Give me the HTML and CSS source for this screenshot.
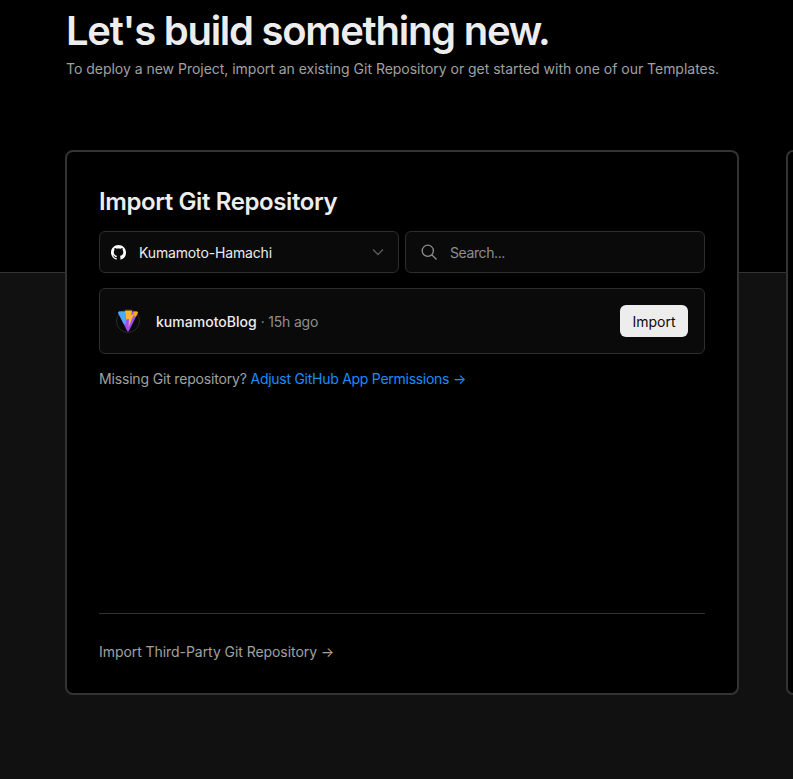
FILE: index.html
```html
<!doctype html>
<html lang="en">
    <head>
        <meta charset="UTF-8" />
        <meta name="viewport" content="width=device-width, initial-scale=1.0" />
        <title>Let's build something new.</title>
        <link rel="stylesheet" href="styles.css">
    </head>
    <body>
        <div class="hero">
            <h1>Let's build something new.</h1>
            <p>To deploy a new Project, import an existing Git Repository or get started with one of our Templates.</p>
        </div>

        <div class="cards">
            <div class="card">
                <h2>Import Git Repository</h2>

                <div class="search-box">
                    <div class="field account">
                        <svg class="github-icon" viewBox="0 0 16 16" width="15" height="15">
                            <path fill="#fff" d="M8 0C3.58 0 0 3.58 0 8c0 3.54 2.29 6.53 5.47 7.59.4.07.55-.17.55-.38 0-.19-.01-.82-.01-1.49-2.01.37-2.53-.49-2.69-.94-.09-.23-.48-.94-.82-1.13-.28-.15-.68-.52-.01-.53.63-.01 1.08.58 1.23.82.72 1.21 1.87.87 2.33.66.07-.52.28-.87.51-1.07-1.78-.2-3.64-.89-3.64-3.95 0-.87.31-1.59.82-2.15-.08-.2-.36-1.02.08-2.12 0 0 .67-.21 2.2.82.64-.18 1.32-.27 2-.27s1.36.09 2 .27c1.53-1.04 2.2-.82 2.2-.82.44 1.1.16 1.92.08 2.12.51.56.82 1.27.82 2.15 0 3.07-1.87 3.75-3.65 3.95.29.25.54.73.54 1.48 0 1.07-.01 1.93-.01 2.2 0 .21.15.46.55.38A8.01 8.01 0 0 0 16 8c0-4.42-3.58-8-8-8z"/>
                        </svg>
                        <span class="account-name">Kumamoto-Hamachi</span>
                        <svg class="chevron" viewBox="0 0 16 16" width="16" height="16">
                            <path fill="none" stroke="#5c5c5c" stroke-width="1.3" d="M3 5.5l5 5 5-5"/>
                        </svg>
                    </div>
                    <div class="field search">
                        <svg class="search-icon" viewBox="0 0 16 16" width="16" height="16">
                            <circle fill="none" stroke="#8f8f8f" stroke-width="1.3" cx="6.8" cy="6.8" r="5.6"/>
                            <path fill="none" stroke="#8f8f8f" stroke-width="1.3" d="M11 11l4.5 4.5"/>
                        </svg>
                        <span class="placeholder">Search...</span>
                    </div>
                </div>

                <div class="repo-row">
                    <div class="repo-logo">
                        <svg viewBox="0 0 24 24" width="24" height="24">
                            <circle cx="12" cy="12" r="11.5" fill="#0a0a0a" stroke="#2a2a2a"/>
                            <path fill="#9d4ff5" d="M2.2 4q-.3-1.5 1-1.5h17.6q1.3 0 1 1.5L12.8 22q-.8 1.2-1.6 0z"/>
                            <path fill="#4aa8fb" d="M2.2 4q-.3-1.5 1-1.5H9l1 11.5-2 1.5z"/>
                            <path fill="#fdb52c" d="M9 1.5h7.2l-1.2 4.5 3-1-5.4 13 .4-8-3 .6z"/>
                            <path fill="#f6a823" d="M17.4 2.5h3.4q1.3 0 1 1.5l-1.6 3.2-2.4.2z"/>
                        </svg>
                    </div>
                    <span class="repo-name">kumamotoBlog</span>
                    <span class="repo-time">· 15h ago</span>
                    <button class="import-button">Import</button>
                </div>

                <p class="missing">Missing Git repository? <a href="#">Adjust GitHub App Permissions →</a></p>

                <div class="card-footer">
                    <a href="#">Import Third-Party Git Repository →</a>
                </div>
            </div>

            <div class="card card-next"></div>
        </div>
    </body>
</html>
```

FILE: styles.css
```css
* {
    margin: 0;
    padding: 0;
    box-sizing: border-box;
}

html,
body {
    height: 779px;
    overflow: hidden;
}

body {
    font-family: Inter, "Noto Sans", sans-serif;
    background: #111;
    color: #ededed;
}

.hero {
    height: 273px;
    padding: 9px 0 0 66px;
    background: black;
    border-bottom: 1px solid #333;
}

.hero h1 {
    font-size: 40px;
    line-height: 44px;
    font-weight: 600;
    letter-spacing: -1.26px;
    color: #ededed;
    white-space: nowrap;
}

.hero p {
    margin-top: 6px;
    font-size: 14px;
    line-height: 20px;
    letter-spacing: -0.02px;
    color: #a1a1a1;
    white-space: nowrap;
}

.cards {
    display: flex;
    gap: 47px;
    margin: -123px 0 0 65px;
}

.card {
    flex: none;
    display: flex;
    flex-direction: column;
    width: 674px;
    height: 545px;
    padding: 32px;
    background: black;
    border: 2px solid #333;
    border-radius: 8px;
}

.card-next {
    flex: 1;
    width: auto;
    min-width: 0;
    padding: 0;
    border-right: none;
    border-radius: 8px 0 0 8px;
}

.card h2 {
    font-size: 24px;
    line-height: 32px;
    font-weight: 600;
    letter-spacing: -0.4px;
    color: #ededed;
    margin-top: 2px;
}

.search-box {
    display: grid;
    grid-template-columns: 1fr 1fr;
    gap: 6px;
    margin-top: 13px;
}

.field {
    display: flex;
    align-items: center;
    height: 42px;
    background: #0a0a0a;
    border: 1px solid #2e2e2e;
    border-radius: 6px;
    font-size: 14px;
}

.account {
    padding: 0 12px 0 11px;
}

.account-name {
    flex: 1;
    margin-left: 13px;
    letter-spacing: -0.15px;
    color: #ededed;
}

.search {
    padding: 0 15px;
}

.placeholder {
    margin-left: 13px;
    letter-spacing: -0.4px;
    color: #8f8f8f;
}

.repo-row {
    display: flex;
    align-items: center;
    height: 66px;
    margin-top: 15px;
    padding: 0 16px;
    background: #0a0a0a;
    border: 1px solid #2e2e2e;
    border-radius: 6px;
    font-size: 14px;
}

.repo-logo {
    display: flex;
    width: 24px;
    height: 24px;
}

.repo-name {
    margin-left: 16px;
    font-weight: 500;
    letter-spacing: 0.02px;
    color: #ededed;
}

.repo-time {
    margin-left: 4px;
    letter-spacing: -0.2px;
    color: #8f8f8f;
}

.import-button {
    margin-left: auto;
    width: 68px;
    height: 32px;
    background: #ededed;
    color: #0a0a0a;
    border: none;
    border-radius: 6px;
    font-family: inherit;
    font-size: 14px;
    font-weight: 400;
}

.missing {
    margin-top: 15px;
    font-size: 14px;
    line-height: 20px;
    letter-spacing: -0.17px;
    color: #a1a1a1;
}

.missing a {
    letter-spacing: -0.27px;
    color: #1a8cff;
    text-decoration: none;
}

.card-footer {
    margin-top: auto;
    padding-top: 28px;
    height: 48px;
    border-top: 1px solid #333;
    font-size: 14px;
    line-height: 20px;
    letter-spacing: -0.06px;
}

.card-footer a {
    color: #a1a1a1;
    text-decoration: none;
}
```
